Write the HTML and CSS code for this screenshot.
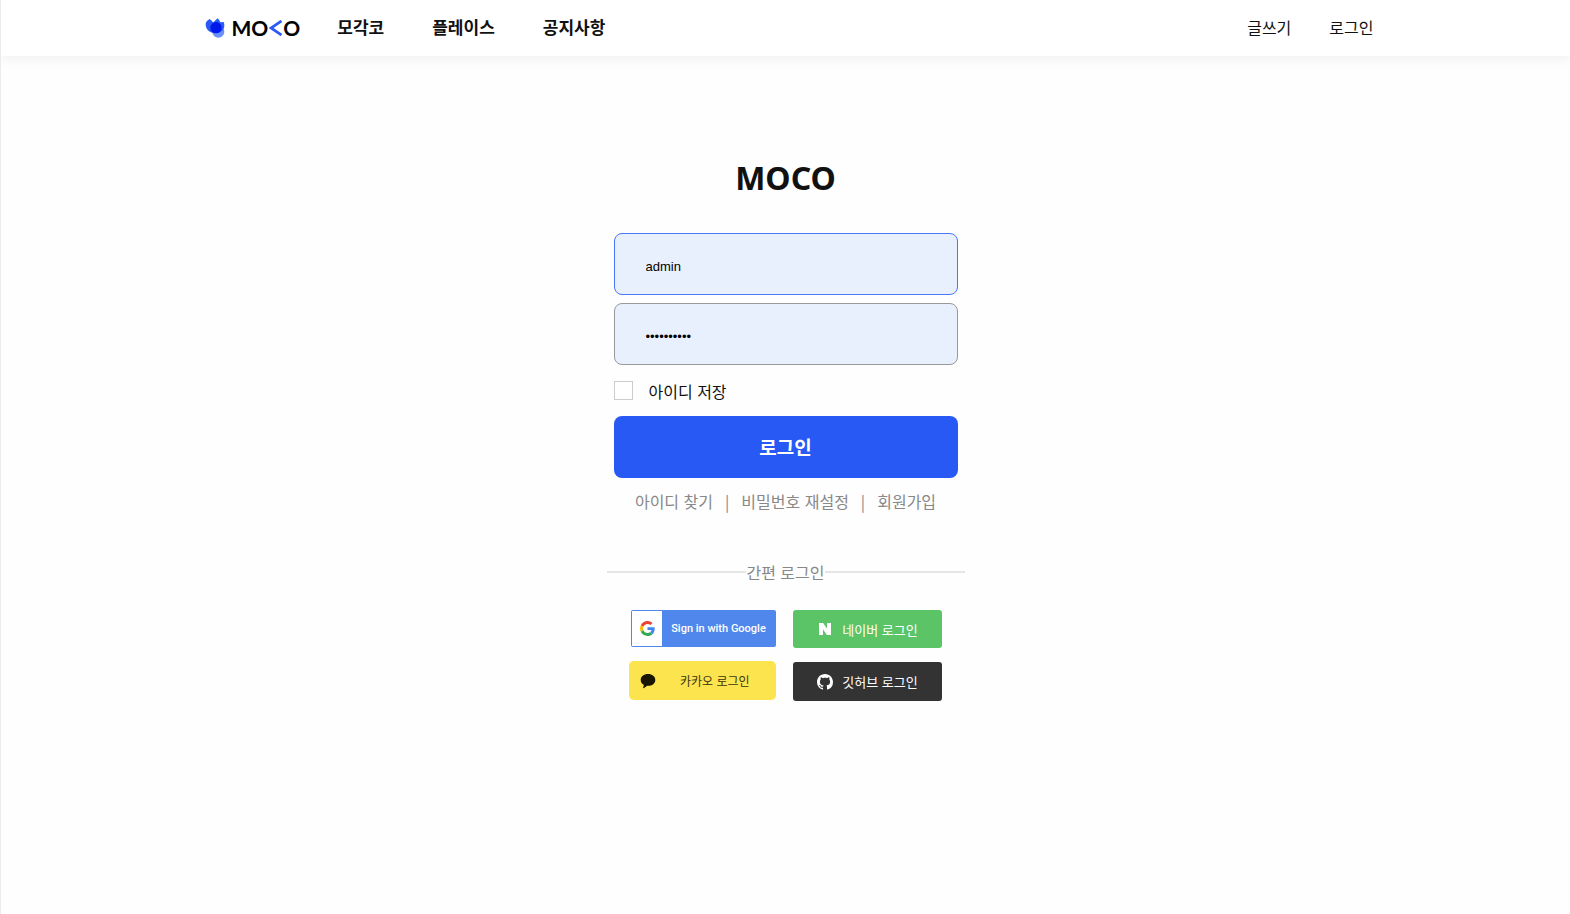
FILE: index.html
```html
<!DOCTYPE html>
<html lang="ko">
<head>
  <meta charset="UTF-8" />
  <meta name="viewport" content="width=device-width, initial-scale=1.0"/>
  <title>MOCO</title>
  <link rel="stylesheet" href="styles.css">
</head>
<body>

  <header class="header">
    <div class="header-inner">
      <a href="#" class="logo" aria-label="MOCO">
        <svg class="logo-mark" viewBox="0 0 60 60" aria-hidden="true">
          <circle cx="40" cy="41" r="18" fill="#6b8ff8"/>
          <path d="M3 13 Q8 6 14 3 Q21 8 25 14 Q43 24 35 45 C14 47 -2 32 3 13Z" fill="#2b59f5"/>
          <path d="M24 14 Q31 7 38 1 Q43 6 46 13 L56 12 C63 30 51 45 33 45 C20 38 16 25 24 14Z" fill="#2b59f5"/>
          <circle cx="33" cy="29" r="17" fill="#0019ea"/>
        </svg>
        <span class="logo-text">MO<svg class="logo-arrow" viewBox="0 0 13 16" aria-hidden="true"><path d="M12.500 1 L2 8 L12.500 15" fill="none" stroke="#2b59f5" stroke-width="2.8"/></svg>O</span>
      </a>
      <nav class="menu">
        <a href="#">모각코</a>
        <a href="#">플레이스</a>
        <a href="#">공지사항</a>
      </nav>
      <div class="user-menu">
        <a href="#">글쓰기</a>
        <a href="#">로그인</a>
      </div>
    </div>
  </header>

  <main class="login">
    <h1>MOCO</h1>
    <form class="login-form">
      <input type="text" class="field active" value="admin" aria-label="아이디">
      <input type="password" class="field" value="moco123456" aria-label="비밀번호">
      <label class="save-id"><input type="checkbox" class="checkbox">아이디 저장</label>
      <button type="button" class="login-button">로그인</button>
    </form>

    <div class="links">
      <a href="#">아이디 찾기</a>
      <span class="bar">|</span>
      <a href="#">비밀번호 재설정</a>
      <span class="bar">|</span>
      <a href="#">회원가입</a>
    </div>

    <div class="divider">간편 로그인</div>

    <div class="social">
      <div class="social-column">
        <button type="button" class="google">
          <span class="google-icon">
            <svg viewBox="0 0 48 48" aria-hidden="true">
              <path fill="#EA4335" d="M24 9.5c3.54 0 6.71 1.22 9.21 3.6l6.85-6.85C35.9 2.38 30.47 0 24 0 14.62 0 6.51 5.38 2.56 13.22l7.98 6.19C12.43 13.72 17.74 9.5 24 9.5z"/>
              <path fill="#4285F4" d="M46.98 24.55c0-1.57-.15-3.09-.38-4.55H24v9.02h12.94c-.58 2.96-2.26 5.48-4.78 7.18l7.73 6c4.51-4.18 7.09-10.36 7.09-17.65z"/>
              <path fill="#FBBC05" d="M10.53 28.59c-.48-1.45-.76-2.99-.76-4.59s.27-3.14.76-4.59l-7.98-6.19C.92 16.46 0 20.12 0 24c0 3.88.92 7.54 2.56 10.78l7.97-6.19z"/>
              <path fill="#34A853" d="M24 48c6.48 0 11.93-2.13 15.89-5.81l-7.73-6c-2.15 1.45-4.92 2.3-8.16 2.3-6.26 0-11.57-4.22-13.47-9.91l-7.98 6.19C6.51 42.62 14.62 48 24 48z"/>
            </svg>
          </span>
          <span class="google-text">Sign in with Google</span>
        </button>
        <button type="button" class="kakao">
          <svg viewBox="0 0 16 16" aria-hidden="true"><path fill="#191600" d="M8 1C3.800 1 .7 3.500.7 6.900c0 2.200 1.300 4 3.200 5l-.8 2.900c-.1.400.2.600.5.400L7.200 12.800c4.700.3 8.100-2.300 8.100-5.900C15.300 3.500 12.200 1 8 1z"/></svg>
          <span>카카오 로그인</span>
        </button>
      </div>
      <div class="social-column">
        <button type="button" class="naver">
          <svg viewBox="0 0 16 16" aria-hidden="true"><path fill="#fff" d="M2 2h4.200l3.800 5.800V2h4v12H9.800L6 8.200V14H2z"/></svg>
          <span>네이버 로그인</span>
        </button>
        <button type="button" class="github">
          <svg viewBox="0 0 16 16" aria-hidden="true"><path fill="#fff" d="M8 0C3.580 0 0 3.580 0 8c0 3.540 2.290 6.530 5.470 7.590.4.070.55-.17.55-.38 0-.19-.01-.82-.01-1.490-2.010.37-2.530-.49-2.690-.94-.09-.23-.48-.94-.82-1.130-.28-.15-.68-.52-.01-.53.63-.01 1.080.58 1.230.82.72 1.210 1.870.87 2.330.66.07-.52.28-.87.51-1.070-1.780-.2-3.640-.89-3.640-3.950 0-.87.31-1.590.82-2.150-.08-.2-.36-1.020.08-2.120 0 0 .67-.21 2.200.82.64-.18 1.320-.27 2-.27s1.360.09 2 .27c1.530-1.040 2.200-.82 2.200-.82.44 1.100.16 1.920.08 2.120.51.56.82 1.270.82 2.150 0 3.070-1.870 3.750-3.650 3.950.29.25.54.73.54 1.480 0 1.070-.01 1.930-.01 2.200 0 .21.15.46.55.38A8.010 8.010 0 0 0 16 8c0-4.420-3.580-8-8-8z"/></svg>
          <span>깃허브 로그인</span>
        </button>
      </div>
    </div>
  </main>

</body>
</html>
```
FILE: styles.css
```css
* {
  box-sizing: border-box;
}

body {
  margin: 0;
  min-height: 100vh;
  border-left: 1px solid #ececec;
  background-color: #fefefe;
  color: #111;
  font-family: "Noto Sans CJK KR", "Noto Sans", sans-serif;
  font-size: 16px;
  line-height: 24px;
}

a {
  color: inherit;
  text-decoration: none;
}

button,
input {
  margin: 0;
  font-family: inherit;
}

button {
  padding: 0;
  border: none;
  cursor: pointer;
}

.header {
  background-color: white;
  box-shadow: 0 3px 12px rgba(0, 0, 0, 0.06);
}

.header-inner {
  display: flex;
  align-items: center;
  max-width: 1176px;
  height: 56px;
  margin: 0 auto;
  padding-left: 7px;
}

.logo {
  display: flex;
  align-items: center;
  gap: 7px;
  color: black;
}

.logo-mark {
  width: 20px;
  height: 20px;
}

.logo-text {
  display: flex;
  align-items: center;
  font-family: Lato, sans-serif;
  font-size: 21px;
  font-weight: bold;
}

.logo-arrow {
  width: 13px;
  height: 16px;
  margin: 0 1px;
}

.menu {
  display: flex;
  gap: 48px;
  margin-left: 37px;
  font-size: 17px;
  font-weight: bold;
}

.user-menu {
  display: flex;
  gap: 38px;
  margin-left: auto;
}

.menu,
.user-menu {
  padding-bottom: 2px;
}

.login {
  width: 344px;
  margin: 0 auto;
  padding-top: 98px;
}

.login h1 {
  margin: 0 0 31px;
  font-family: "Noto Sans", sans-serif;
  font-size: 32px;
  line-height: 48px;
  text-align: center;
}

.login-form {
  display: flex;
  flex-direction: column;
  gap: 8px;
}

.field {
  width: 100%;
  height: 62px;
  padding: 4px 31px 0;
  border: 1px solid #999;
  border-radius: 8px;
  background-color: #e8effd;
  color: black;
  font-family: "Liberation Sans", Arial, sans-serif;
  font-size: 13px;
  outline: none;
}

.field.active {
  border-color: #4a76fb;
}

.save-id {
  display: flex;
  align-items: center;
  gap: 16px;
  height: 35px;
}

.checkbox {
  appearance: none;
  width: 19px;
  height: 19px;
  border: 1px solid #ccc;
  background-color: white;
}

.login-button {
  height: 62px;
  padding-bottom: 2px;
  border-radius: 8px;
  background-color: #2859f5;
  color: white;
  font-size: 19px;
  font-weight: bold;
}

.links {
  display: flex;
  justify-content: center;
  margin-top: 11px;
  color: #888;
}

.bar {
  margin: 0 12px;
}

.divider {
  display: flex;
  align-items: center;
  margin: 47px -7px 0;
  color: #888;
}

.divider::before,
.divider::after {
  content: "";
  flex: 1;
  height: 2px;
  background-color: #e5e5e5;
}

.social {
  display: flex;
  justify-content: center;
  gap: 17px;
  margin-top: 26px;
}

.social-column {
  display: flex;
  flex-direction: column;
  align-items: flex-end;
  gap: 14px;
}

.social button {
  display: flex;
  align-items: center;
}

.social .google {
  width: 145px;
  height: 37px;
  padding: 1px;
  border-radius: 2px;
  background-color: #5087ec;
  color: white;
  font-family: Roboto, sans-serif;
  font-size: 11px;
  font-weight: 500;
}

.google-icon {
  display: flex;
  align-items: center;
  justify-content: center;
  width: 30px;
  height: 35px;
  background-color: white;
}

.google-icon svg {
  width: 15px;
  height: 17px;
}

.google-text {
  flex: 1;
  text-align: center;
}

.social .kakao {
  width: 147px;
  height: 39px;
  padding-left: 11px;
  gap: 24px;
  border-radius: 5px;
  background-color: #fbe44d;
  color: #3a3410;
  font-size: 12px;
}

.kakao svg,
.naver svg,
.github svg {
  width: 16px;
  height: 16px;
}

.social .naver,
.social .github {
  justify-content: center;
  gap: 9px;
  width: 149px;
  height: 38px;
  border-radius: 3px;
  background-color: #5ac467;
  color: white;
  font-size: 13px;
}

.social .github {
  height: 39px;
  background-color: #333;
}
```
